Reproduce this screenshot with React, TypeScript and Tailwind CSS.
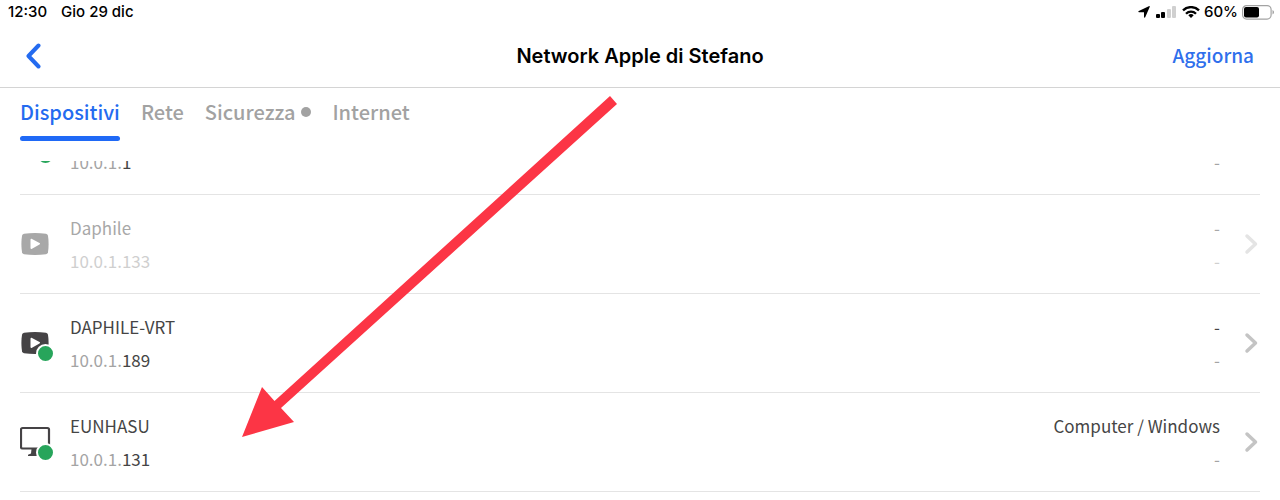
type DeviceIcon = "player" | "computer";

interface Device {
  id: number;
  name: string;
  network: string;
  host: string;
  kind: string;
  icon: DeviceIcon;
  online: boolean;
}

const devices: Device[] = [
  { id: 1, name: "", network: "10.0.1.", host: "1", kind: "", icon: "player", online: true },
  { id: 2, name: "Daphile", network: "10.0.1.", host: "133", kind: "-", icon: "player", online: false },
  { id: 3, name: "DAPHILE-VRT", network: "10.0.1.", host: "189", kind: "-", icon: "player", online: true },
  { id: 4, name: "EUNHASU", network: "10.0.1.", host: "131", kind: "Computer / Windows", icon: "computer", online: true },
];

const tabs = [
  { label: "Dispositivi", active: true, dot: false },
  { label: "Rete", active: false, dot: false },
  { label: "Sicurezza", active: false, dot: true },
  { label: "Internet", active: false, dot: false },
];

function StatusBar() {
  return (
    <div className="flex h-6 items-center justify-between pr-1.5 pl-2 font-['Inter',sans-serif] text-[15px] font-medium text-black">
      <div className="flex gap-3.5">
        <span>12:30</span>
        <span>Gio 29 dic</span>
      </div>
      <div className="flex items-center">
        <svg className="mr-1.5 h-3 w-3" viewBox="0 0 12 12" aria-hidden="true">
          <path d="M11.700.9 7.200 11.300c-.3.7-1.200.5-1.200-.2V6.200H1C.2 6.200.1 5.200.800 4.900L10.800.200c.7-.3 1.200.1.900.7Z" />
        </svg>
        <svg className="mr-1.5 h-3 w-5" viewBox="0 0 20 12" aria-hidden="true">
          <rect x="0" y="8" width="4" height="4" rx="1" />
          <rect x="5" y="6" width="4" height="6" rx="1" />
          <rect x="11" y="3" width="4" height="9" rx="1" fill="#d0d0d0" />
          <rect x="16" y="0" width="4" height="12" rx="1" fill="#d0d0d0" />
        </svg>
        <svg className="mr-1 h-3 w-[18px]" viewBox="1 0 18 12" fill="none" stroke="#000" strokeWidth="2.300" aria-hidden="true">
          <path d="M2 4.400a11.300 11.300 0 0 1 16 0M5 7.700a7 7 0 0 1 10 0" />
          <path d="M7.300 9.300a4 4 0 0 1 5.400 0L10 12Z" fill="#000" stroke="none" />
        </svg>
        <span>60%</span>
        <svg className="ml-1 h-4 w-8" viewBox="0 0 32 16" aria-hidden="true">
          <rect x=".6" y="1.600" width="28.500" height="13.500" rx="4" fill="none" stroke="#a3a3a3" strokeWidth="1.200" />
          <rect x="2" y="3" width="15" height="10.500" rx="2" />
          <path d="M30.500 6v4.500c1-.4 1.500-1.300 1.500-2.250S31.500 6.400 30.500 6Z" fill="#a3a3a3" />
        </svg>
      </div>
    </div>
  );
}

function PlayerIcon() {
  return (
    <svg className="ml-px h-6 w-7" viewBox="0 0 28 24" aria-hidden="true">
      <path
        fill="currentColor"
        d="M3 1.800Q14 .4 25 1.800q1.700.3 2 2 1.200 8.200 0 16.400-.3 1.700-2 2Q14 23.600 3 22.200 1.300 21.900 1 20.200q-1.200-8.200 0-16.400Q1.300 2.100 3 1.800Z"
      />
      <path fill="#fff" d="M9.500 7.800c0-.9.7-1.200 1.500-.8l7.500 4.100c.7.400.7 1 0 1.400L11 16.800c-.8.400-1.500.1-1.500-.8Z" />
    </svg>
  );
}

function ComputerIcon() {
  return (
    <svg className="h-8 w-8" viewBox="0 0 32 32" aria-hidden="true">
      <rect x="1" y="2" width="28" height="20.500" rx="1.500" fill="none" stroke="currentColor" strokeWidth="2.200" />
      <path d="M11.500 23h7l1 4.500 3 1.200V30H8v-1.300l3-1.200Z" fill="currentColor" />
    </svg>
  );
}

function Chevron({ className }: { className: string }) {
  return (
    <svg
      className={className}
      viewBox="0 0 16 24"
      fill="none"
      stroke="currentColor"
      strokeWidth="3.5"
      strokeLinecap="round"
      strokeLinejoin="round"
      aria-hidden="true"
    >
      <path d="m3 4 8.500 8L3 20" />
    </svg>
  );
}

function BackIcon() {
  return (
    <svg
      className="h-7 w-4"
      viewBox="0 0 16 28"
      fill="none"
      stroke="currentColor"
      strokeWidth="4"
      strokeLinecap="round"
      strokeLinejoin="round"
      aria-hidden="true"
    >
      <path d="M12.500 3.500 2.500 14l10 10.500" />
    </svg>
  );
}

function DeviceRow({ device }: { device: Device }) {
  const { name, network, host, kind, icon, online } = device;
  return (
    <li className="border-b border-[#e4e4e4] first:-mt-[65px]">
      <button type="button" className="flex w-full items-center py-4 text-left">
        <span
          className={
            online
              ? "relative flex h-8 w-[50px] shrink-0 items-center text-[#454345]"
              : "relative flex h-8 w-[50px] shrink-0 items-center text-[#a8a8a8]"
          }
        >
          {icon === "player" ? <PlayerIcon /> : <ComputerIcon />}
          {online && (
            <span className="absolute top-[17px] left-4 size-[19px] rounded-full border-2 border-white bg-[#27a55b]" />
          )}
        </span>
        <span className={online ? "grow text-[#454545]" : "grow text-[#a8a8a8]"}>
          <span className="block min-h-[33px]">{name}</span>
          <span className={online ? "block text-[#a4a4a4]" : "block text-[#cfcfcf]"}>
            {network}
            <span className={online ? "text-[#454545]" : ""}>{host}</span>
          </span>
        </span>
        <span className={online ? "text-right text-[#454545]" : "text-right text-[#a8a8a8]"}>
          <span className="block min-h-[33px]">{kind}</span>
          <span className={online ? "block text-[#a4a4a4]" : "block text-[#cfcfcf]"}>-</span>
        </span>
        <Chevron className={online ? "ml-6 h-6 w-4 text-[#c4c4c4]" : "ml-6 h-6 w-4 text-[#e4e4e4]"} />
      </button>
    </li>
  );
}

export default function App() {
  return (
    <div className="relative overflow-hidden bg-white font-['Noto_Sans_CJK_SC',sans-serif]">
      <StatusBar />
      <header className="grid h-16 grid-cols-[1fr_auto_1fr] items-center border-b border-[#d4d4d4] px-[26px]">
        <button type="button" aria-label="Indietro" className="justify-self-start text-[#246bf0]">
          <BackIcon />
        </button>
        <h1 className="font-['Inter',sans-serif] text-xl font-semibold text-black">Network Apple di Stefano</h1>
        <button type="button" className="justify-self-end text-[19px] font-medium text-[#2f6fec]">
          Aggiorna
        </button>
      </header>

      <nav className="flex items-start gap-[21px] px-5 pt-2 text-xl font-medium">
        {tabs.map((tab) => (
          <button
            key={tab.label}
            type="button"
            className={tab.active ? "text-[#246bf0]" : "text-[#a2a2a2]"}
          >
            <span className="flex h-8 items-center gap-1.5">
              {tab.label}
              {tab.dot && <span className="size-2.5 rounded-full bg-[#a2a2a2]" />}
            </span>
            {tab.active && <span className="mt-2 block h-[5px] rounded-full bg-[#1f69f6]" />}
          </button>
        ))}
      </nav>

      <main className="mt-5 overflow-hidden px-5 text-[17px] leading-[33px]">
        {/* the list is scrolled, so its first row is cut under the tabs */}
        <ul className="flex flex-col">
          {devices.map((device) => (
            <DeviceRow key={device.id} device={device} />
          ))}
        </ul>
      </main>

      <svg
        className="pointer-events-none absolute top-[95px] left-[241px] h-[343px] w-[377px]"
        viewBox="241 95 377 343"
        fill="#fc3545"
        aria-hidden="true"
      >
        <path d="M610 96 617 104 281 408 294 422 242 437 262 387 274.500 401Z" />
      </svg>
    </div>
  );
}
